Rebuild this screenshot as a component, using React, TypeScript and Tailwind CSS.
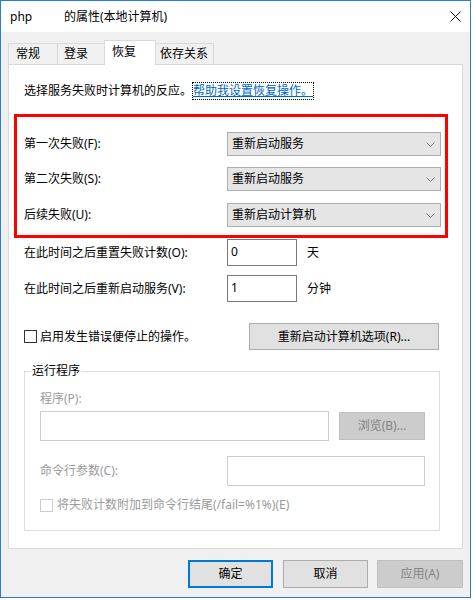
import React from "react"

const FONT = "font-['Noto_Sans','Noto_Sans_CJK_SC',sans-serif]"

const Chevron = () => (
    <svg width="9" height="5" viewBox="0 0 9 5" className="ml-auto mr-[5px]">
        <path d="M0.5 0.5 L4.5 4.5 L8.5 0.5" fill="none" stroke="#7a7a7a" strokeWidth="1" />
    </svg>
)

const Select = ({ value }: { value: string }) => (
    <div className="flex h-[24px] w-[214px] items-center border border-[#adadad] bg-[#e5e5e5] pl-[4px]">
        <span>{value}</span>
        <Chevron />
    </div>
)

const FailRow = ({ label, value, top }: { label: string; value: string; top: string }) => (
    <div className={`flex items-center ${top}`}>
        <div className="w-[203px]">{label}</div>
        <Select value={value} />
    </div>
)

const Tab = ({ label, w, pl, active }: { label: string; w: string; pl: string; active?: boolean }) =>
    active ? (
        <div className={`relative z-10 -mb-px flex h-[25px] items-center border border-b-0 border-[#d9d9d9] bg-white pb-[2px] ${w} ${pl}`}>
            {label}
        </div>
    ) : (
        <div className={`flex h-[21px] items-center border border-r-0 border-b-0 border-[#d9d9d9] bg-[#f0f0f0] ${w} ${pl}`}>
            {label}
        </div>
    )

const Button = ({ label, w, kind }: { label: string; w: string; kind?: "default" | "disabled" }) => {
    const look =
        kind === "default"
            ? "border-2 border-[#0078d7] bg-[#e1e1e1]"
            : kind === "disabled"
              ? "border border-[#bfbfbf] bg-[#cccccc] text-[#838383]"
              : "border border-[#adadad] bg-[#e1e1e1]"
    return <div className={`flex h-[28px] items-center justify-center ${w} ${look}`}>{label}</div>
}

export default function App() {
    return (
        <div className={`${FONT} text-[12px] leading-[16px] text-black`}>
            <div className="flex h-[598px] w-[471px] flex-col border border-[#2b7bd6] bg-[#f0f0f0]">
                {/* title bar */}
                <div className="flex h-[31px] items-center bg-white">
                    <span className="ml-[9px] w-[54px]">php</span>
                    <span>的属性(本地计算机)</span>
                    <svg width="11" height="11" viewBox="0 0 11 11" className="ml-auto mr-[9px]">
                        <path d="M0.5 0.5 L10.5 10.5 M10.5 0.5 L0.5 10.5" stroke="#111" strokeWidth="1" />
                    </svg>
                </div>

                <div className="flex flex-1 flex-col px-[7px]">
                    {/* tabs */}
                    <div className="mt-[8px] flex items-end">
                        <Tab label="常规" w="w-[49px]" pl="pl-[7px]" />
                        <Tab label="登录" w="w-[47px]" pl="pl-[6px]" />
                        <Tab label="恢复" w="w-[52px]" pl="pl-[7px]" active />
                        <div className="flex h-[21px] w-[58px] items-center border border-b-0 border-l-0 border-[#d9d9d9] bg-[#f0f0f0] pl-[4px]">
                            依存关系
                        </div>
                    </div>

                    {/* panel */}
                    <div className="flex h-[485px] w-[455px] flex-col border border-[#d9d9d9] bg-white">
                        <div className="ml-[15px] mt-[18px] flex items-center">
                            <span>选择服务失败时计算机的反应。</span>
                            <span className="ml-px text-[#0066cc] underline outline-1 outline-dotted outline-black">
                                帮助我设置恢复操作。
                            </span>
                        </div>

                        <div className="ml-[5px] mt-[15px] h-[124px] w-[434px] border-[3px] border-[#ff0000] pl-[7px] pt-[15px]">
                            <FailRow label="第一次失败(F):" value="重新启动服务" top="" />
                            <FailRow label="第二次失败(S):" value="重新启动服务" top="mt-[11px]" />
                            <FailRow label="后续失败(U):" value="重新启动计算机" top="mt-[12px]" />
                        </div>

                        <div className="ml-[15px] mt-px flex items-center">
                            <div className="w-[203px]">在此时间之后重置失败计数(O):</div>
                            <div className="h-[27px] w-[70px] border border-[#7a7a7a] pl-[3px] pt-[4px]">0</div>
                            <span className="ml-[10px]">天</span>
                        </div>
                        <div className="ml-[15px] mt-[9px] flex items-center">
                            <div className="w-[203px]">在此时间之后重新启动服务(V):</div>
                            <div className="h-[27px] w-[70px] border border-[#7a7a7a] pl-[3px] pt-[4px]">1</div>
                            <span className="ml-[10px]">分钟</span>
                        </div>

                        <div className="ml-[15px] mt-[21px] flex items-center">
                            <div className="flex w-[225px] items-center">
                                <div className="h-[13px] w-[13px] border border-[#333]" />
                                <span className="ml-[3px]">启用发生错误便停止的操作。</span>
                            </div>
                            <div className="flex h-[27px] w-[190px] items-center justify-center border border-[#adadad] bg-[#e1e1e1]">
                                重新启动计算机选项(R)...
                            </div>
                        </div>

                        <fieldset className="ml-[15px] mt-[13px] h-[168px] w-[416px] border border-[#dcdcdc] pl-[6px]">
                            <legend className="px-px leading-[16px]">运行程序</legend>
                            <div className="ml-[9px]">
                                <div className="mt-[12px] text-[#9a9a9a]">程序(P):</div>
                                <div className="mt-[4px] flex items-center">
                                    <div className="h-[30px] w-[289px] border border-[#cccccc]" />
                                    <div className="ml-[10px] flex h-[28px] w-[86px] items-center justify-center border border-[#bfbfbf] bg-[#cccccc] text-[#838383]">
                                        浏览(B)...
                                    </div>
                                </div>
                                <div className="mt-[15px] flex items-center">
                                    <div className="w-[187px] text-[#9a9a9a]">命令行参数(C):</div>
                                    <div className="h-[30px] w-[198px] border border-[#cccccc]" />
                                </div>
                                <div className="mt-[11px] flex items-center text-[#9a9a9a]">
                                    <div className="h-[13px] w-[13px] border border-[#cccccc]" />
                                    <span className="ml-[4px]">将失败计数附加到命令行结尾(/fail=%1%)(E)</span>
                                </div>
                            </div>
                        </fieldset>
                    </div>

                    {/* dialog buttons */}
                    <div className="mt-[11px] flex justify-end">
                        <Button label="确定" w="w-[85px]" kind="default" />
                        <div className="w-[10px]" />
                        <Button label="取消" w="w-[85px]" />
                        <div className="w-[9px]" />
                        <Button label="应用(A)" w="w-[86px]" kind="disabled" />
                    </div>
                </div>
            </div>
        </div>
    )
}
